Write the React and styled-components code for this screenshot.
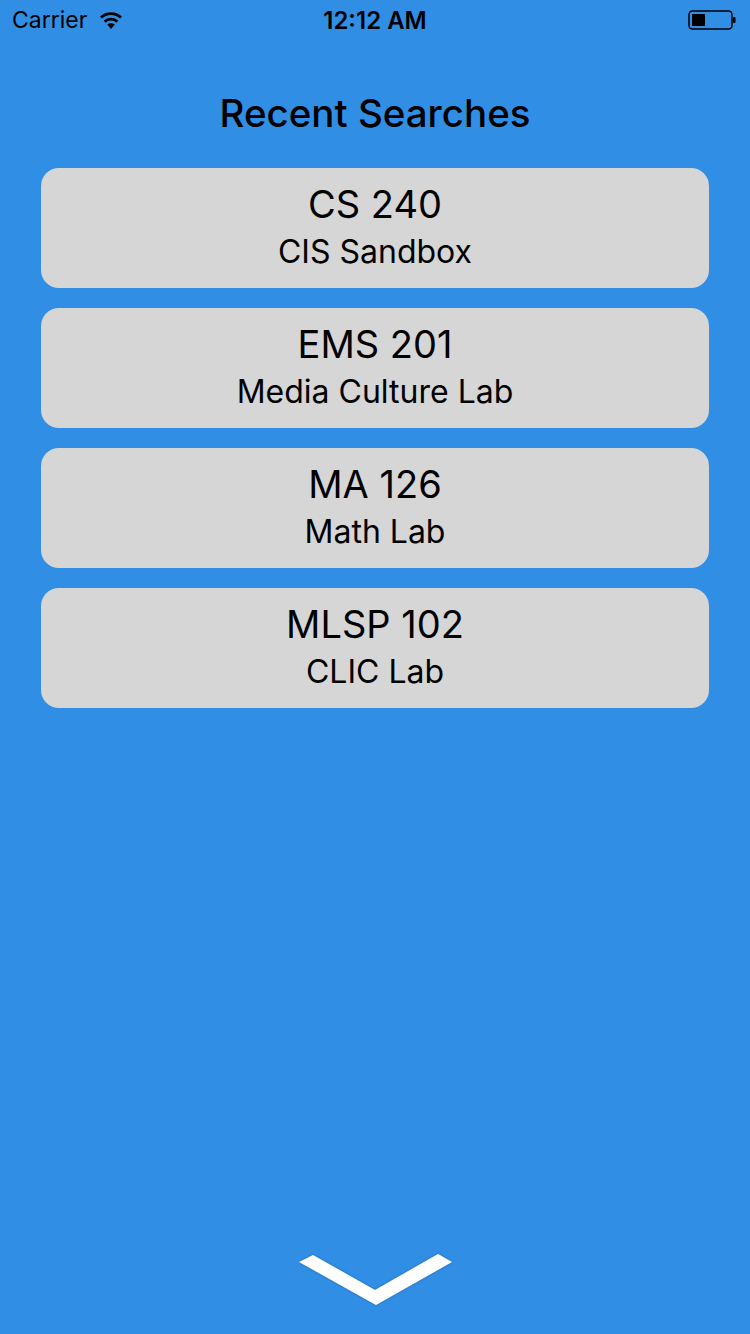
import React from "react";
import styled, { createGlobalStyle } from "styled-components";

const Global = createGlobalStyle`
  html, body { margin: 0; padding: 0; background: #318ee5; }
  body { font-family: Inter, Roboto, "Noto Sans", sans-serif; }
`;

const Screen = styled.div`
  width: 750px;
  height: 1334px;
  background: #318ee5;
  display: flex;
  flex-direction: column;
  position: relative;
  overflow: hidden;
`;

const StatusBar = styled.div`
  height: 40px;
  display: grid;
  grid-template-columns: 1fr auto 1fr;
  align-items: center;
  padding: 0 12px 0 12px;
  color: #000;
  font-size: 23px;
`;

const Left = styled.div`
  display: flex;
  align-items: center;
  gap: 12px;
`;

const Time = styled.div`
  font-weight: 600;
  font-size: 24px;
`;

const Right = styled.div`
  display: flex;
  justify-content: flex-end;
  align-items: center;
`;

const Title = styled.h1`
  margin: 48px 0 0;
  height: 50px;
  line-height: 50px;
  text-align: center;
  font-size: 38.5px;
  font-weight: 500;
  color: #000;
`;

const List = styled.div`
  margin: 30px 41px 0;
  display: flex;
  flex-direction: column;
  gap: 20px;
`;

const Card = styled.div`
  height: 120px;
  background: #d6d6d6;
  border-radius: 18px;
  display: flex;
  flex-direction: column;
  align-items: center;
  justify-content: center;
  color: #000;
`;

const Code = styled.div`
  font-size: 38px;
  line-height: 46px;
`;

const Place = styled.div`
  font-size: 32px;
  line-height: 46px;
  margin-top: 2px;
`;

const Footer = styled.div`
  margin-top: auto;
  display: flex;
  justify-content: center;
  padding-bottom: 26px;
`;

const items = [
  ["CS 240", "CIS Sandbox"],
  ["EMS 201", "Media Culture Lab"],
  ["MA 126", "Math Lab"],
  ["MLSP 102", "CLIC Lab"],
];

export default function App() {
  return (
    <Screen>
      <Global />
      <StatusBar>
        <Left>
          <span>Carrier</span>
          <svg width="24" height="18" viewBox="0 0 24 18">
            <path d="M12 18 L8.2 13.6 A5.8 5.8 0 0 1 15.8 13.6 Z" fill="#000" />
            <path d="M5.6 10.6 A9.4 9.4 0 0 1 18.4 10.6" stroke="#000" strokeWidth="2.8" fill="none" />
            <path d="M2 6.6 A14.5 14.5 0 0 1 22 6.6" stroke="#000" strokeWidth="2.8" fill="none" />
          </svg>
        </Left>
        <Time>12:12 AM</Time>
        <Right>
          <svg width="50" height="22" viewBox="0 0 50 22">
            <rect x="1" y="2" width="43" height="18" rx="3.5" fill="none" stroke="#000" strokeWidth="1.5" />
            <rect x="4" y="5" width="13" height="12" fill="#000" />
            <rect x="45" y="8" width="2.5" height="6" rx="1" fill="#000" />
          </svg>
        </Right>
      </StatusBar>
      <Title>Recent Searches</Title>
      <List>
        {items.map(([c, p]) => (
          <Card key={c}>
            <Code>{c}</Code>
            <Place>{p}</Place>
          </Card>
        ))}
      </List>
      <Footer>
        <svg width="160" height="56" viewBox="294 1254 160 56">
          <defs>
            <filter id="sh" x="-10%" y="-30%" width="120%" height="160%">
              <feDropShadow dx="0" dy="0" stdDeviation="1.2" floodColor="#0a3a70" floodOpacity="0.6" />
            </filter>
          </defs>
          <polygon points="298,1264 312,1257 374,1292 437,1256 451,1264 375,1307" fill="#fff" filter="url(#sh)" />
        </svg>
      </Footer>
    </Screen>
  );
}
